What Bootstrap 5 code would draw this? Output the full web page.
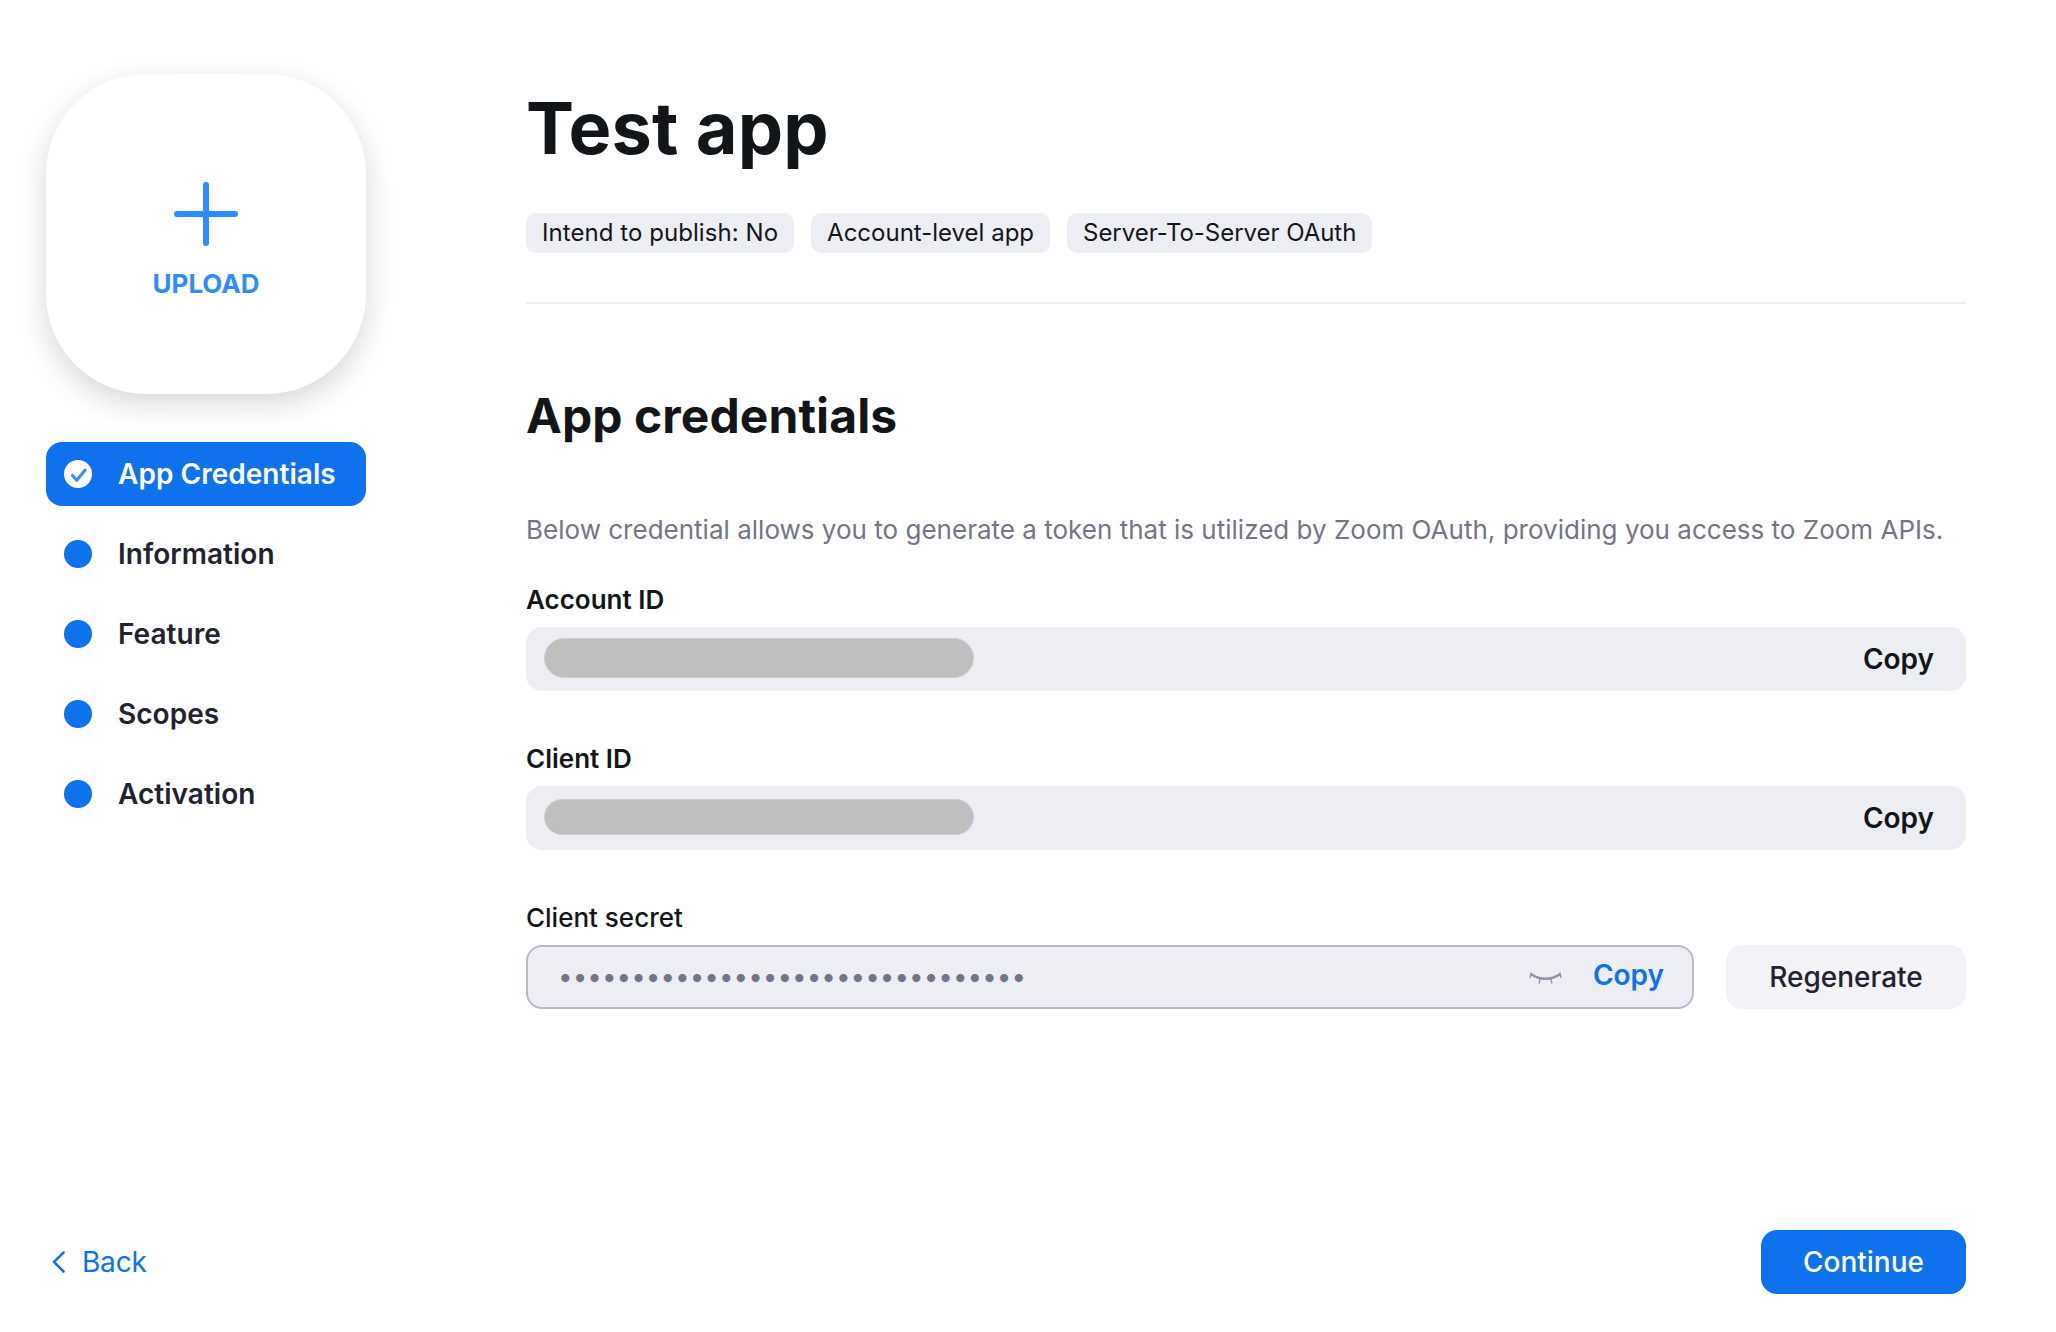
<!DOCTYPE html>
<html lang="en">
<head>
<meta charset="utf-8">
<title>Test app</title>
<link href="https://cdn.jsdelivr.net/npm/bootstrap@5.3.0/dist/css/bootstrap.min.css" rel="stylesheet">
<style>
body{font-family:Inter,"Liberation Sans",sans-serif;font-size:28px;color:#131619;background:#fff;height:1332px;overflow:hidden}
.page{padding:74px 90px 38px 46px;height:1332px}
.side{width:320px;flex:none}
.upload{width:320px;height:320px;border-radius:100px;background:#fff;box-shadow:0 10px 30px rgba(0,0,0,.16);color:#2d8cff;border:0;padding:15px 0 0}
.upload span{font-size:26px;font-weight:650;line-height:36px;margin-top:20px}
.steps{margin-top:48px;gap:16px}
.steps .nav-link{height:64px;border-radius:16px;padding:0 18px;gap:26px;color:#222230;font-weight:600;line-height:64px;letter-spacing:.03px}
.steps .nav-link.active{background:#0e72ed;color:#fff}
.dot{width:28px;height:28px;border-radius:50%;background:#0e72ed;flex:none}
.content{margin-left:160px;width:1440px;padding-top:10px}
h1{font-size:72px;font-weight:700;line-height:88px;margin:0 0 41px;letter-spacing:.15px}
.tags{gap:17px;margin-bottom:49px}
.tag{height:40px;border-radius:10px;background:#ededf4;font-size:24px;line-height:40px;padding:0 16px;font-weight:400;color:#131619}
.tag:first-child{letter-spacing:.06px}
.tag:last-child{letter-spacing:-.04px}
.rule{height:2px;background:#ededf4;margin-bottom:82px}
h2{font-size:48px;font-weight:700;line-height:60px;margin:0 0 64px;letter-spacing:.08px}
.intro{font-size:26px;line-height:40px;color:#747487;margin:0 0 32px;white-space:nowrap;letter-spacing:.01px}
.flabel{font-size:26px;line-height:36px;font-weight:600;margin-bottom:9px}
.fieldbox{height:64px;border-radius:16px;background:#ededf4;padding:0 32px 0 18px}
.group{margin-bottom:50px}
.mask{width:430px;height:40px;border-radius:20px;background:#bfbfbf;border:1px solid #cdcdd0;margin-top:-2px}
.mask.slim{height:36px;border-radius:18px}
.copy{font-size:28px;font-weight:600;line-height:60px;color:#131619}
.secret{border:2px solid #b8b8cc;width:1168px;padding:0 28px 0 30px}
.secret .copy{color:#0e72ed;margin-left:29px;padding-bottom:4px}
.bullets{color:#747487;font-size:26px;line-height:60px}
.regen{width:240px;height:64px;border-radius:16px;background:#f2f2f7;color:#222230;font-size:28px;font-weight:500;padding:0}
.cont{width:205px;height:64px;border-radius:16px;background:#0e72ed;border:0;color:#fff;font-size:28px;font-weight:500;padding:0}
.back{color:#0e72ed;gap:17px;padding-left:6px;letter-spacing:-.2px}
</style>
</head>
<body>
<div class="page d-flex flex-column justify-content-between">
  <div class="d-flex align-items-start">
    <aside class="side">
      <button class="upload d-flex flex-column align-items-center justify-content-center">
        <svg width="64" height="64" viewBox="0 0 64 64" fill="none" stroke="currentColor" stroke-width="6" stroke-linecap="round"><path d="M32 3v58M3 32h58"/></svg>
        <span>UPLOAD</span>
      </button>
      <nav class="steps nav flex-column">
        <a class="nav-link active d-flex align-items-center" href="#"><svg width="28" height="28" viewBox="0 0 28 28"><circle cx="14" cy="14" r="14" fill="#fff"/><path d="M8.500 15.500l4.200 4.700L21 10.200" fill="none" stroke="#3a8cf8" stroke-width="3.200" stroke-linecap="round" stroke-linejoin="round"/></svg><span>App Credentials</span></a>
        <a class="nav-link d-flex align-items-center" href="#"><i class="dot"></i><span>Information</span></a>
        <a class="nav-link d-flex align-items-center" href="#"><i class="dot"></i><span>Feature</span></a>
        <a class="nav-link d-flex align-items-center" href="#"><i class="dot"></i><span>Scopes</span></a>
        <a class="nav-link d-flex align-items-center" href="#"><i class="dot"></i><span>Activation</span></a>
      </nav>
    </aside>
    <main class="content">
      <h1>Test app</h1>
      <div class="tags d-flex"><span class="tag">Intend to publish: No</span><span class="tag">Account-level app</span><span class="tag">Server-To-Server OAuth</span></div>
      <div class="rule"></div>
      <h2>App credentials</h2>
      <p class="intro">Below credential allows you to generate a token that is utilized by Zoom OAuth, providing you access to Zoom APIs.</p>
      <div class="group">
        <div class="flabel">Account ID</div>
        <div class="fieldbox d-flex align-items-center justify-content-between"><div class="mask"></div><span class="copy">Copy</span></div>
      </div>
      <div class="group">
        <div class="flabel">Client ID</div>
        <div class="fieldbox d-flex align-items-center justify-content-between"><div class="mask slim"></div><span class="copy">Copy</span></div>
      </div>
      <div>
        <div class="flabel fw-medium" style="font-weight:500">Client secret</div>
        <div class="d-flex justify-content-between">
          <div class="fieldbox secret d-flex align-items-center">
            <span class="bullets">••••••••••••••••••••••••••••••••</span>
            <svg class="ms-auto" width="36" height="16" viewBox="0 0 36 16" fill="none" stroke="#9090a3"><path stroke-width="2.400" d="M2.500 5Q17.500 14.500 32.500 5"/><path stroke-width="1.300" d="M3.200 3.500L2 9M31.800 3.500L33 9M12.200 9.500L11 14.500M22.800 9.500L24 14.500"/></svg>
            <span class="copy">Copy</span>
          </div>
          <button class="btn regen">Regenerate</button>
        </div>
      </div>
    </main>
  </div>
  <footer class="d-flex align-items-center justify-content-between">
    <a class="back d-flex align-items-center text-decoration-none" href="#"><svg width="13" height="22" viewBox="0 0 13 22" fill="none" stroke="currentColor" stroke-width="2.500" stroke-linecap="round"><path d="M11.500 1.500L2 11l9.500 9.500"/></svg><span>Back</span></a>
    <button class="btn cont">Continue</button>
  </footer>
</div>
<script src="https://cdn.jsdelivr.net/npm/bootstrap@5.3.0/dist/js/bootstrap.bundle.min.js"></script>
</body>
</html>
